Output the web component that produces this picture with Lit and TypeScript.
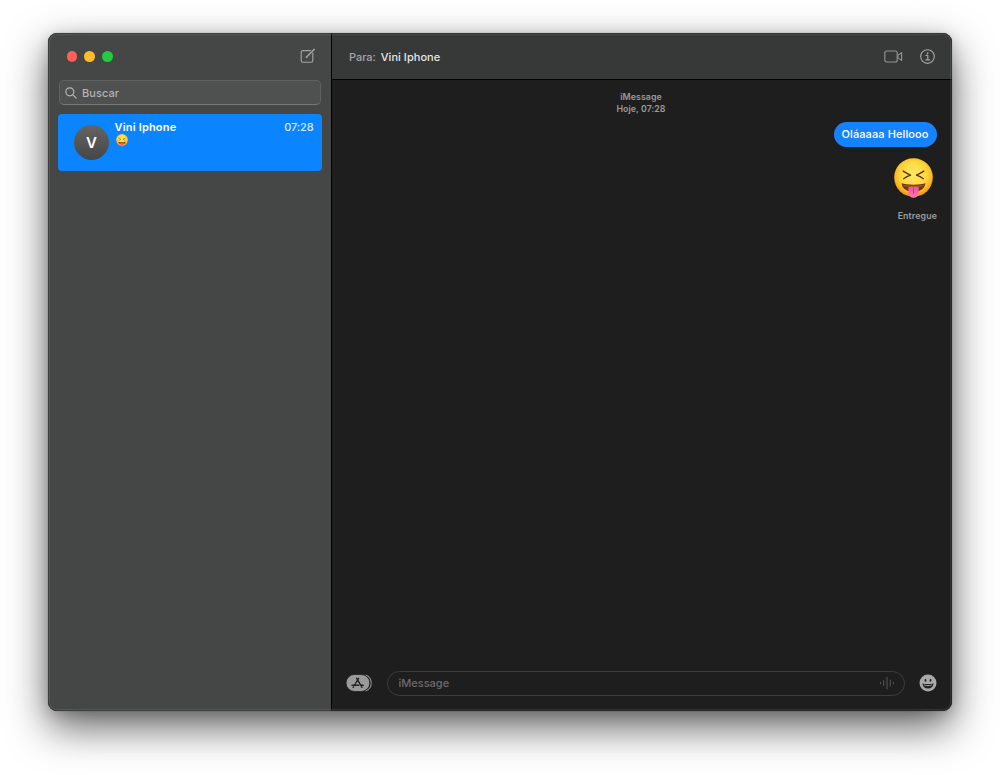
import { LitElement, html, css, svg } from 'lit';
import { customElement, property } from 'lit/decorators.js';

@customElement('tongue-emoji')
class TongueEmoji extends LitElement {
  static styles = css`
    :host { display: block; }
    svg { display: block; width: 100%; height: 100%; overflow: visible; }
  `;
  render() {
    return html`<svg viewBox="0 0 40 41">
      <defs>
        <radialGradient id="face" cx="50%" cy="42%" r="56%">
          <stop offset="0" stop-color="#ffe867" />
          <stop offset=".6" stop-color="#ffd83f" />
          <stop offset=".86" stop-color="#fbb621" />
          <stop offset="1" stop-color="#ee9415" />
        </radialGradient>
        <linearGradient id="tongue" x1="0" y1="0" x2="0" y2="1">
          <stop offset="0" stop-color="#f0509c" />
          <stop offset="1" stop-color="#ff78b6" />
        </linearGradient>
      </defs>
      <circle cx="20" cy="20" r="19.8" fill="url(#face)" />
      <g fill="none" stroke="#5b3708" stroke-width="1.4" stroke-linecap="round" stroke-linejoin="round">
        <path d="M9.4 13.4 Q13 15.6 17 17.6 Q13 18.8 9.9 21.2" />
        <path d="M30.6 13.4 Q27 15.6 23 17.6 Q27 18.8 30.1 21.2" />
      </g>
      <path d="M7.8 26 C12 27.8 28 27.8 32.2 26 C31.4 32.4 26 34.6 20 34.6 C14 34.6 8.6 32.4 7.8 26Z" fill="#74380b" />
      <path d="M9.3 27.3 C15 28.7 25 28.7 30.7 27.3 L30 28.8 C24 30 16 30 10 28.8Z" fill="#a55e1c" />
      <path d="M14.6 30 Q17.4 28.6 20 29.8 Q22.6 28.6 25.4 30 L25.2 35.6 C25 39 22.8 40.8 20 40.8 C17.2 40.8 15 39 14.8 35.6Z" fill="url(#tongue)" />
      <path d="M20 31 V36" stroke="#cf327e" stroke-width="1" stroke-linecap="round" />
    </svg>`;
  }
}

const line = {
  compose: svg`
  <path d="M10.4 2.6 H3 Q1.2 2.6 1.2 4.4 V12.4 Q1.2 14.2 3 14.2 H11 Q12.8 14.2 12.8 12.4 V5" />
  <path d="M6.6 9 L14.2 1.4 M6.3 9.3 l.8-.3" stroke-width="1.5" />`,
  search: svg`<circle cx="4.8" cy="4.8" r="4" /><path d="M7.8 7.8 L11.2 11.2" />`,
  video: svg`<rect x=".8" y="1" width="12.4" height="11" rx="2" /><path d="M13.8 5.4 L17.6 2.6 V10.4 L13.8 7.6 Z" />`,
  info: svg`<circle cx="7.5" cy="7.5" r="6.8" /><path d="M6 6.4 H7.8 V10.8 M5.8 10.9 H9.6" /><circle cx="7.5" cy="4.1" r=".55" fill="currentColor" stroke-width=".6" />`,
  wave: svg`<path d="M1.5 6.3v1.4 M4.6 4.6v4.8 M8 1.2v11.6 M11.3 4v6 M14.4 6.3v1.4" />`,
};

@customElement('line-icon')
class LineIcon extends LitElement {
  static styles = css`
    :host { display: block; }
    svg { display: block; width: 100%; height: 100%; overflow: visible; }
  `;
  @property() name: keyof typeof line = 'search';
  @property() box = '0 0 12 12';
  render() {
    return html`<svg viewBox=${this.box} fill="none" stroke="currentColor" stroke-width="1.15"
      stroke-linecap="round" stroke-linejoin="round">${line[this.name]}</svg>`;
  }
}

@customElement('app-root')
class AppRoot extends LitElement {
  static styles = css`
    :host {
      display: block; width: 1000px; height: 775px; box-sizing: border-box;
      padding: 33px 48px 64px; background: #fff; overflow: hidden;
      font-family: Inter, "Liberation Sans", sans-serif; font-size: 11px; line-height: 14px;
    }
    * { box-sizing: border-box; }
    .window {
      position: relative; display: grid; grid-template-columns: 283px 1fr; height: 678px;
      border-radius: 9px; background: #1e1e1e;
      box-shadow: 0 0 1px rgba(0,0,0,.5), 0 16px 40px rgba(0,0,0,.62), 0 3px 14px rgba(0,0,0,.16);
    }
    .window::after {
      content: ""; position: absolute; inset: 0; border-radius: 9px; pointer-events: none;
      border: 1px solid rgba(50,50,50,.45);
      box-shadow: inset 0 0 0 1px rgba(255,255,255,.09);
    }
    .sidebar { background: #454746; border-radius: 9px 0 0 9px; padding: 0 9px 0 10px; }
    .titlebar { display: flex; align-items: center; justify-content: space-between; height: 47px; padding: 0 7.5px 0 8px; }
    .lights { display: flex; gap: 7px; padding-left: .6px; }
    .light { width: 10.8px; height: 10.8px; border-radius: 50%; }
    .red { background: #ff5f57; } .amber { background: #febc2e; } .green { background: #28c840; }
    .compose { width: 15px; height: 15px; color: #a2a3a3; margin-top: -2px; }
    .search {
      display: flex; align-items: center; height: 25px; margin: 0 1px; padding: 0 5px; gap: 5px;
      background: #4f5150; border: 1px solid #606261; border-bottom-color: #777978; border-radius: 5px;
      color: #b2b3b3; letter-spacing: .08px; font-weight: 500;
    }
    .search line-icon { width: 12px; height: 12px; color: #b8b9b9; }
    .chat {
      display: flex; height: 57px; margin-top: 9px; padding: 6px 8.5px 0 16px;
      background: #0a84ff; border-radius: 4px; color: #fff;
    }
    .avatar {
      width: 35px; height: 35px; margin: 5px 5.5px 0 0; border-radius: 50%;
      background: linear-gradient(#646464, #464646); font-size: 15px; line-height: 36px; text-align: center; font-weight: 600;
    }
    .who { flex: 1; font-weight: 600; letter-spacing: .18px; }
    .who tongue-emoji { width: 12px; height: 12.4px; margin: 0 0 0 1px; }
    .time { color: #d6eaff; font-weight: 500; letter-spacing: -.12px; }
    .main { display: flex; flex-direction: column; border-left: 1px solid #000; min-width: 0; }
    .header {
      display: flex; align-items: center; height: 47px; padding: 0 17px 0 17px;
      background: #373938; border-bottom: 1px solid #000; border-radius: 0 9px 0 0;
    }
    .para, .name { margin-top: 1px; }
    .para { color: #a5a6a6; margin-right: 5px; font-weight: 500; letter-spacing: -.06px; }
    .name { flex: 1; color: #e6e6e6; font-weight: 500; letter-spacing: .04px; }
    .video { width: 19px; height: 13px; margin-right: 17.5px; color: #929393; }
    .info { width: 15px; height: 15px; color: #a4a5a5; }
    .messages { flex: 1; display: flex; flex-direction: column; align-items: flex-end; padding: 12px 15px 0 13px; }
    .stamp { align-self: center; text-align: center; color: #9b9b9b; font-size: 8.8px; line-height: 11.5px; letter-spacing: .05px; font-weight: 600; margin-top: -1px; }
    .bubble {
      height: 25px; margin-top: 8px; padding: 0 8.5px 0 8px; border-radius: 13px; line-height: 24px;
      background: #1683fe; color: #fff; font-weight: 500; letter-spacing: .1px;
    }
    .sticker { width: 39px; height: 40px; margin: 11px 4px 0 0; }
    .receipt { margin-top: 12px; color: #9c9c9c; font-size: 8.8px; line-height: 12px; font-weight: 600; letter-spacing: .12px; }
    .composer { display: flex; align-items: center; height: 52px; padding: 0 15.5px 0 14px; margin-bottom: 2px; }
    .apps { width: 27px; height: 18px; margin-right: 14px; }
    .field {
      flex: 1; display: flex; align-items: center; justify-content: space-between; height: 25px;
      border: 1px solid #3c3c3c; border-radius: 13px; padding: 0 9px 0 10.5px; color: #6c6c6c; font-weight: 500;
    }
    .field line-icon { width: 16px; height: 14px; color: #505050; }
    .smile { width: 18px; height: 18px; margin-left: 13.5px; }
  `;

  render() {
    return html`<div class="window">
      <aside class="sidebar">
        <div class="titlebar">
          <div class="lights"><span class="light red"></span><span class="light amber"></span><span class="light green"></span></div>
          <line-icon class="compose" name="compose" box="0 0 15 15"></line-icon>
        </div>
        <div class="search"><line-icon name="search" box="0 0 12 12"></line-icon><span>Buscar</span></div>
        <div class="chat">
          <div class="avatar">V</div>
          <div class="who">Vini Iphone<tongue-emoji></tongue-emoji></div>
          <div class="time">07:28</div>
        </div>
      </aside>
      <section class="main">
        <header class="header">
          <span class="para">Para:</span><span class="name">Vini Iphone</span>
          <line-icon class="video" name="video" box="0 0 19 13"></line-icon>
          <line-icon class="info" name="info" box="0 0 15 15"></line-icon>
        </header>
        <div class="messages">
          <div class="stamp">iMessage<br />Hoje, 07:28</div>
          <div class="bubble">Oláaaaa Hellooo</div>
          <tongue-emoji class="sticker"></tongue-emoji>
          <div class="receipt">Entregue</div>
        </div>
        <footer class="composer">
          <svg class="apps" viewBox="0 0 27 18">
            <path d="M19.5 1 Q25.2 3 25.2 9 T19.5 17" fill="none" stroke="#8c8c8c" stroke-width="1.2" />
            <rect x="0" y=".5" width="23.8" height="17" rx="8.5" fill="#9a9a9a" stroke="#1e1e1e" stroke-width=".8" />
            <g fill="none" stroke="#222" stroke-width="1.4" stroke-linecap="round">
              <path d="M10.7 4.3 L14.8 11.4 M15.5 12.6 L16 13.4 M12.6 4.3 L8.6 11 M7.6 12.8 L7.2 13.4 M6 11.2 H12.8 M15 11.2 H17.2" />
            </g>
          </svg>
          <div class="field"><span>iMessage</span><line-icon name="wave" box="0 0 16 14"></line-icon></div>
          <svg class="smile" viewBox="0 0 18 18">
            <circle cx="9" cy="9" r="8.5" fill="#a8a8a8" />
            <ellipse cx="6.5" cy="6.4" rx=".9" ry="1.3" fill="#222" /><ellipse cx="11.5" cy="6.4" rx=".9" ry="1.3" fill="#222" />
            <path d="M3.4 9.4 Q9 10.8 14.6 9.4 Q13.8 14.4 9 14.4 T3.4 9.4Z" fill="#222" />
            <path d="M4.8 10.5 Q9 11.6 13.2 10.5 L12.8 11.6 Q9 12.5 5.2 11.6Z" fill="#a8a8a8" />
          </svg>
        </footer>
      </section>
    </div>`;
  }
}
